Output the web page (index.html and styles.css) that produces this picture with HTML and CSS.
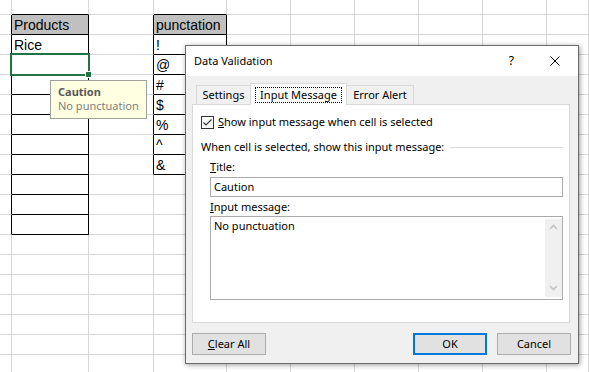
FILE: index.html
```html
<!DOCTYPE html>
<html lang="en">
<head>
<meta charset="UTF-8">
<title>Data Validation - Input Message</title>
<meta name="viewport" content="width=device-width, initial-scale=1.0">
<link rel="stylesheet" href="styles.css">
</head>
<body>

<div class="page">
    <table class="sheet">
        <colgroup>
            <col class="c0"><col class="c1"><col class="c2"><col class="c3">
            <col class="cw"><col class="cw"><col class="cw"><col class="cw"><col class="cw"><col>
        </colgroup>
        <tr class="top"><td></td><td class="above"></td><td></td><td class="above"></td><td></td><td></td><td></td><td></td><td></td><td></td></tr>
        <tr><td class="edge"></td><td class="box head">Products</td><td class="edge"></td><td class="box head">punctation</td><td></td><td></td><td></td><td></td><td></td><td></td></tr>
        <tr><td class="edge"></td><td class="box">Rice</td><td class="edge"></td><td class="box">!</td><td></td><td></td><td></td><td></td><td></td><td></td></tr>
        <tr><td class="edge"></td><td class="box active"><span class="sel"></span><span class="handle"></span></td><td class="edge"></td><td class="box">@</td><td></td><td></td><td></td><td></td><td></td><td></td></tr>
        <tr><td class="edge"></td><td class="box"></td><td class="edge"></td><td class="box">#</td><td></td><td></td><td></td><td></td><td></td><td></td></tr>
        <tr><td class="edge"></td><td class="box"></td><td class="edge"></td><td class="box">$</td><td></td><td></td><td></td><td></td><td></td><td></td></tr>
        <tr><td class="edge"></td><td class="box"></td><td class="edge"></td><td class="box">%</td><td></td><td></td><td></td><td></td><td></td><td></td></tr>
        <tr><td class="edge"></td><td class="box"></td><td class="edge"></td><td class="box">^</td><td></td><td></td><td></td><td></td><td></td><td></td></tr>
        <tr><td class="edge"></td><td class="box"></td><td class="edge"></td><td class="box">&amp;</td><td></td><td></td><td></td><td></td><td></td><td></td></tr>
        <tr><td class="edge"></td><td class="box"></td><td></td><td></td><td></td><td></td><td></td><td></td><td></td><td></td></tr>
        <tr><td class="edge"></td><td class="box"></td><td></td><td></td><td></td><td></td><td></td><td></td><td></td><td></td></tr>
        <tr><td class="edge"></td><td class="box"></td><td></td><td></td><td></td><td></td><td></td><td></td><td></td><td></td></tr>
        <tr><td></td><td></td><td></td><td></td><td></td><td></td><td></td><td></td><td></td><td></td></tr>
        <tr><td></td><td></td><td></td><td></td><td></td><td></td><td></td><td></td><td></td><td></td></tr>
        <tr><td></td><td></td><td></td><td></td><td></td><td></td><td></td><td></td><td></td><td></td></tr>
        <tr><td></td><td></td><td></td><td></td><td></td><td></td><td></td><td></td><td></td><td></td></tr>
        <tr><td></td><td></td><td></td><td></td><td></td><td></td><td></td><td></td><td></td><td></td></tr>
        <tr><td></td><td></td><td></td><td></td><td></td><td></td><td></td><td></td><td></td><td></td></tr>
        <tr><td></td><td></td><td></td><td></td><td></td><td></td><td></td><td></td><td></td><td></td></tr>
    </table>

    <!-- input message tooltip of the active cell -->
    <div class="tip">
        <b>Caution</b>
        No punctuation
    </div>

    <div class="dialog">
        <div class="titlebar">
            <span class="title">Data Validation</span>
            <span class="help">?</span>
            <svg class="close" width="10" height="10" viewBox="0 0 10 10"><path d="M0.5 0.5 L9.5 9.5 M9.5 0.5 L0.5 9.5" stroke="#000" stroke-width="1" fill="none"/></svg>
        </div>
        <div class="dlg-body">
            <div class="tabs">
                <div class="tab tab-settings"><span class="label">Settings</span></div>
                <div class="tab tab-input"><span class="label">Input Message</span></div>
                <div class="tab tab-error"><span class="label">Error Alert</span></div>
            </div>
            <div class="panel">
                <div class="check-row">
                    <span class="checkbox"><svg width="11" height="11" viewBox="0 0 11 11"><path d="M1.5 5.5 L4 8 L9.5 2.5" stroke="#333" stroke-width="1.1" fill="none"/></svg></span>
                    <span><u>S</u>how input message when cell is selected</span>
                </div>
                <div class="group">When cell is selected, show this input message:</div>
                <div class="fields">
                    <div class="field-label"><u>T</u>itle:</div>
                    <div class="textbox">Caution</div>
                    <div class="field-label"><u>I</u>nput message:</div>
                    <div class="textarea">
                        <div class="msg">No punctuation</div>
                        <div class="scrollbar">
                            <svg width="9" height="6" viewBox="0 0 9 6"><path d="M1 5 L4.5 1.5 L8 5" stroke="#c4c4c4" stroke-width="1.6" fill="none"/></svg>
                            <svg width="9" height="6" viewBox="0 0 9 6"><path d="M1 1 L4.5 4.5 L8 1" stroke="#c4c4c4" stroke-width="1.6" fill="none"/></svg>
                        </div>
                    </div>
                </div>
            </div>
            <div class="buttons">
                <div class="btn btn-clear"><u>C</u>lear All</div>
                <div class="btn btn-ok">OK</div>
                <div class="btn">Cancel</div>
            </div>
        </div>
    </div>
</div>

</body>
</html>
```
FILE: styles.css
```css
body { margin:0; background:#fff; font-family: "Liberation Sans", Arial, sans-serif; color:#000; }

.page { position: relative; width: 589px; height: 372px; overflow: hidden; }

/* worksheet */
.sheet { border-collapse: separate; border-spacing: 0; table-layout: fixed; width: 589px; font-size: 14px; }
.sheet col.c0 { width: 12px; }
.sheet col.c1 { width: 77px; }
.sheet col.c2 { width: 65px; }
.sheet col.c3 { width: 73px; }
.sheet col.cw { width: 64px; }
.sheet tr { height: 20px; }
.sheet tr.top { height: 15px; }
.sheet td { border-right: 1px solid #d6d6d6; border-bottom: 1px solid #d6d6d6; padding: 0 2px; line-height: 18px; vertical-align: bottom; white-space: nowrap; }
.sheet td.edge { border-right-color: #000; }
.sheet td.above { border-bottom-color: #000; }
.sheet td.box { border-right-color: #000; border-bottom-color: #000; }
.sheet td.head { background: #c0c0c0; }
.sheet td.active { position: relative; }

.sel { position: absolute; left: -2px; top: -2px; right: -2px; bottom: -2px; border: 2px solid #217346; }
.handle { position: absolute; right: -4px; bottom: -4px; width: 5px; height: 5px; background: #217346; border: 1px solid #fff; }

.tip {
    position: absolute; left: 50px; top: 80px;
    background: #ffffe1; border: 1px solid #a0a0a0;
    padding: 4px 7px 5px 7px;
    font-family: "Noto Sans", sans-serif; font-size: 11px; line-height: 14px; color: #7f7f7f;
}
.tip b { display: block; color: #595959; }

/* dialog */
.dialog {
    position: absolute; left: 185px; top: 45px; width: 394px; height: 319px;
    box-sizing: border-box; border: 1px solid #6b6b6b; background: #f0f0f0;
    box-shadow: 1px 1px 5px rgba(0,0,0,0.4);
    display: flex; flex-direction: column;
    font-family: "Noto Sans", sans-serif; font-size: 11px; line-height: 16px; color: #000;
}
.titlebar { height: 30px; background: #fff; display: flex; align-items: center; padding: 0 18px 0 8px; }
.titlebar .title { flex: 1; }
.help { font-size: 12px; margin-right: 36px; }

.dlg-body { flex: 1; display: flex; flex-direction: column; padding: 7px 7px 8px 6px; }

.tabs { display: flex; align-items: flex-end; height: 21px; padding-left: 4px; }
.tab { height: 19px; box-sizing: border-box; border: 1px solid #d9d9d9; border-bottom: none; padding-top: 1px; text-align: center; }
.tab .label { display: inline-block; padding: 0 4px; border: 1px solid transparent; line-height: 14px; }
.tab-settings { width: 54px; border-right: none; }
.tab-input { width: 97px; height: 22px; margin-bottom: -1px; padding-top: 3px; background: #fff; position: relative; }
.tab-input .label { border: 1px dotted #000; }
.tab-error { width: 67px; border-left: none; }

.panel { height: 219px; box-sizing: border-box; border: 1px solid #d9d9d9; background: #fff; margin-right: 1px; padding: 9px 6px 0 8px; }

.check-row { display: flex; align-items: center; }
.checkbox { width: 13px; height: 13px; box-sizing: border-box; border: 1px solid #333; background: #fff; margin-right: 4px; display: flex; }

.group { display: flex; align-items: center; margin-top: 9px; }
.group::after { content: ""; flex: 1; height: 1px; background: #dcdcdc; margin-left: 6px; }

.fields { padding-left: 9px; }
.field-label { margin-top: 4px; }
.field-label + .textbox { margin-top: 2px; }
.textbox { height: 20px; box-sizing: border-box; border: 1px solid #ababab; padding: 1px 3px; }
.textbox + .field-label { margin-top: 2px; }
.textarea { margin-top: 1px; height: 84px; box-sizing: border-box; border: 1px solid #ababab; display: flex; }
.msg { flex: 1; padding: 1px 3px; }
.scrollbar { width: 17px; margin: 2px 0; background: #f0f0f0; display: flex; flex-direction: column; justify-content: space-between; align-items: center; padding: 5px 0 6px; box-sizing: border-box; }

.buttons { display: flex; gap: 10px; margin-top: 10px; }
.btn { width: 74px; height: 22px; box-sizing: border-box; border: 1px solid #adadad; background: #e1e1e1; text-align: center; line-height: 20px; }
.btn-clear { margin-right: auto; }
.btn-ok { border: 2px solid #0078d7; line-height: 18px; }
```
